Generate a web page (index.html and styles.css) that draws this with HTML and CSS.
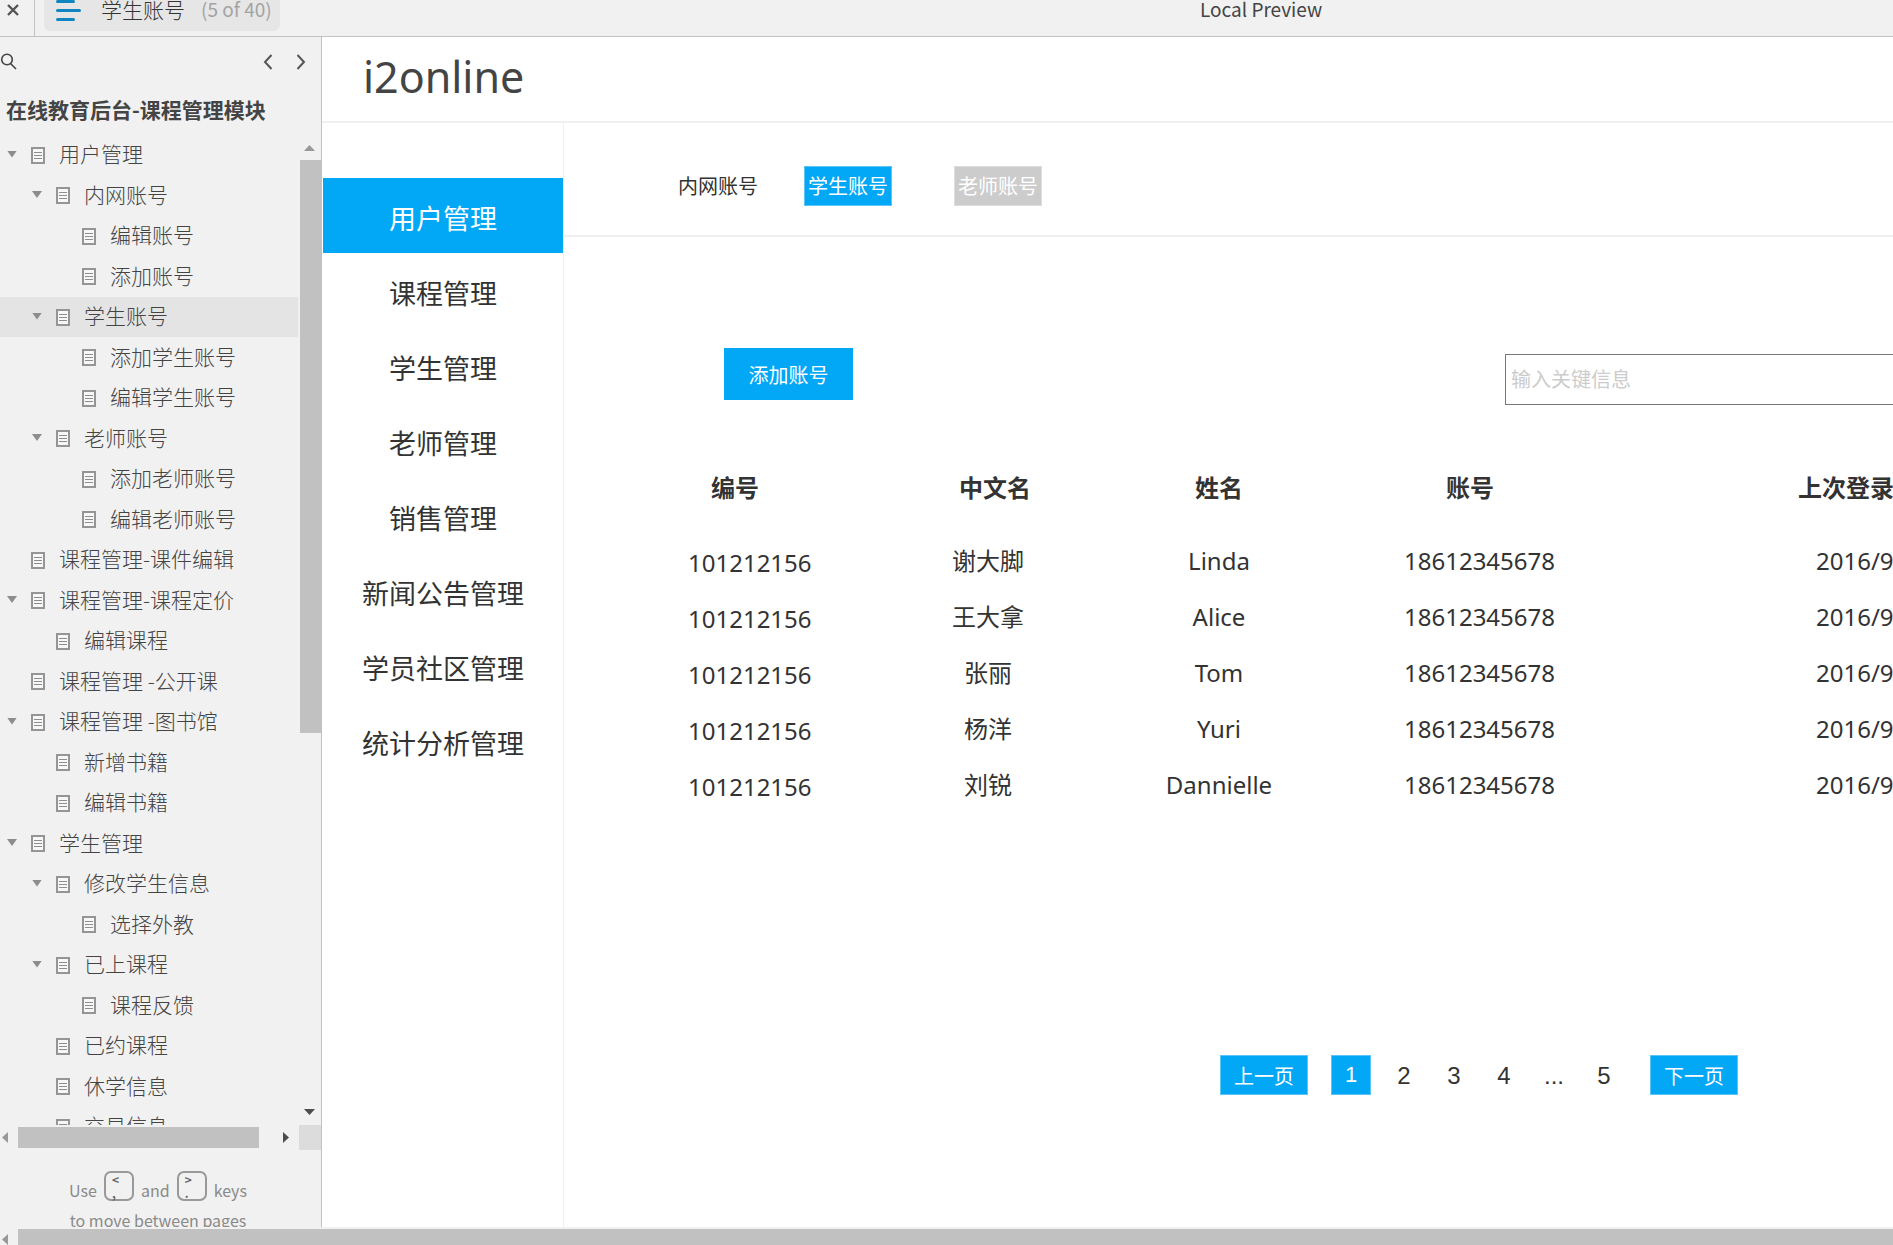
FILE: index.html
```html
<!DOCTYPE html>
<html lang="zh-CN">
<head>
<meta charset="utf-8">
<title>学生账号</title>
<link rel="stylesheet" href="styles.css">
</head>
<body>
<svg class="defs" aria-hidden="true">
  <symbol id="page" viewBox="0 0 14 17"><rect x="1" y="1" width="12" height="15" fill="#f7f7f7" stroke="#959595" stroke-width="2"/><path d="M3 5.500h8M3 8.500h8M3 11.500h8" stroke="#8d8d8d"/></symbol>
</svg>

<header class="topbar">
  <button class="close" aria-label="关闭"><svg width="12" height="12" viewBox="0 0 12 12"><path d="M1 1l10 10M11 1L1 11" stroke="#555" stroke-width="2.4"/></svg></button>
  <button class="page-pill">
    <svg width="26" height="21" viewBox="0 0 26 21"><path d="M1.500 1.500h16M1.500 10.500h22M1.500 19.500h16" stroke="#0f86c0" stroke-width="3" stroke-linecap="round"/></svg>
    <span class="page-name">学生账号</span>
    <span class="page-count">(5 of 40)</span>
  </button>
  <span class="preview">Local Preview</span>
</header>

<div class="workspace">
  <aside class="sidebar">
    <div class="tools">
      <button aria-label="搜索"><svg width="17" height="17" viewBox="0 0 17 17" fill="none" stroke="#444" stroke-width="1.6"><circle cx="7" cy="6.500" r="5.300"/><path d="M10.500 10.500l5.500 5.500"/></svg></button>
      <span class="steps">
        <button aria-label="上一页"><svg width="10" height="16" viewBox="0 0 10 16"><path d="M8.500 1L2 8l6.500 7" fill="none" stroke="#555" stroke-width="2"/></svg></button>
        <button aria-label="下一页"><svg width="10" height="16" viewBox="0 0 10 16"><path d="M1.500 1L8 8l-6.500 7" fill="none" stroke="#555" stroke-width="2"/></svg></button>
      </span>
    </div>
    <h2 class="project">在线教育后台-课程管理模块</h2>
    <div class="tree-area">
      <ul class="tree">
        <li class="l0 open"><svg><use href="#page"/></svg><a href="#">用户管理</a></li>
        <li class="l1 open"><svg><use href="#page"/></svg><a href="#">内网账号</a></li>
        <li class="l2"><svg><use href="#page"/></svg><a href="#">编辑账号</a></li>
        <li class="l2"><svg><use href="#page"/></svg><a href="#">添加账号</a></li>
        <li class="l1 open selected"><svg><use href="#page"/></svg><a href="#">学生账号</a></li>
        <li class="l2"><svg><use href="#page"/></svg><a href="#">添加学生账号</a></li>
        <li class="l2"><svg><use href="#page"/></svg><a href="#">编辑学生账号</a></li>
        <li class="l1 open"><svg><use href="#page"/></svg><a href="#">老师账号</a></li>
        <li class="l2"><svg><use href="#page"/></svg><a href="#">添加老师账号</a></li>
        <li class="l2"><svg><use href="#page"/></svg><a href="#">编辑老师账号</a></li>
        <li class="l0"><svg><use href="#page"/></svg><a href="#">课程管理-课件编辑</a></li>
        <li class="l0 open"><svg><use href="#page"/></svg><a href="#">课程管理-课程定价</a></li>
        <li class="l1"><svg><use href="#page"/></svg><a href="#">编辑课程</a></li>
        <li class="l0"><svg><use href="#page"/></svg><a href="#">课程管理 -公开课</a></li>
        <li class="l0 open"><svg><use href="#page"/></svg><a href="#">课程管理 -图书馆</a></li>
        <li class="l1"><svg><use href="#page"/></svg><a href="#">新增书籍</a></li>
        <li class="l1"><svg><use href="#page"/></svg><a href="#">编辑书籍</a></li>
        <li class="l0 open"><svg><use href="#page"/></svg><a href="#">学生管理</a></li>
        <li class="l1 open"><svg><use href="#page"/></svg><a href="#">修改学生信息</a></li>
        <li class="l2"><svg><use href="#page"/></svg><a href="#">选择外教</a></li>
        <li class="l1 open"><svg><use href="#page"/></svg><a href="#">已上课程</a></li>
        <li class="l2"><svg><use href="#page"/></svg><a href="#">课程反馈</a></li>
        <li class="l1"><svg><use href="#page"/></svg><a href="#">已约课程</a></li>
        <li class="l1"><svg><use href="#page"/></svg><a href="#">休学信息</a></li>
        <li class="l1"><svg><use href="#page"/></svg><a href="#">交易信息</a></li>
      </ul>
      <div class="vbar"><i class="arrow up"></i><i class="track"><i class="vthumb"></i></i><i class="arrow down"></i></div>
    </div>
    <div class="hbar"><i class="arrow left"></i><i class="hthumb"></i><i class="arrow right"></i><i class="corner"></i></div>
    <div class="hint">
      <p>Use <kbd><span>&lt;</span><span>,</span></kbd> and <kbd><span>&gt;</span><span>.</span></kbd> keys</p>
      <p>to move between pages</p>
    </div>
  </aside>

  <main class="site">
    <div class="brand"><h1>i2online</h1></div>
    <div class="site-body">
      <nav class="menu">
        <a href="#" class="active">用户管理</a>
        <a href="#">课程管理</a>
        <a href="#">学生管理</a>
        <a href="#">老师管理</a>
        <a href="#">销售管理</a>
        <a href="#">新闻公告管理</a>
        <a href="#">学员社区管理</a>
        <a href="#">统计分析管理</a>
      </nav>
      <section class="content">
        <div class="tabs">
          <button class="tab">内网账号</button>
          <button class="tab current">学生账号</button>
          <button class="tab muted">老师账号</button>
        </div>
        <div class="toolbar">
          <button class="add">添加账号</button>
          <input class="search" type="text" placeholder="输入关键信息" aria-label="输入关键信息">
        </div>
        <table class="accounts">
          <colgroup><col class="c-id"><col class="c-cn"><col class="c-en"><col class="c-account"><col></colgroup>
          <thead><tr><th class="id">编号</th><th class="cn">中文名</th><th>姓名</th><th class="account">账号</th><th class="last">上次登录</th></tr></thead>
          <tbody>
            <tr><td class="id">101212156</td><td>谢大脚</td><td>Linda</td><td class="account">18612345678</td><td class="last">2016/9</td></tr>
            <tr><td class="id">101212156</td><td>王大拿</td><td>Alice</td><td class="account">18612345678</td><td class="last">2016/9</td></tr>
            <tr><td class="id">101212156</td><td>张丽</td><td>Tom</td><td class="account">18612345678</td><td class="last">2016/9</td></tr>
            <tr><td class="id">101212156</td><td>杨洋</td><td>Yuri</td><td class="account">18612345678</td><td class="last">2016/9</td></tr>
            <tr><td class="id">101212156</td><td>刘锐</td><td>Dannielle</td><td class="account">18612345678</td><td class="last">2016/9</td></tr>
          </tbody>
        </table>
        <div class="pager">
          <button class="step">上一页</button>
          <button class="num current">1</button>
          <div class="nums">
            <button class="num">2</button>
            <button class="num">3</button>
            <button class="num">4</button>
            <span class="num">...</span>
            <button class="num">5</button>
          </div>
          <button class="step">下一页</button>
        </div>
      </section>
    </div>
  </main>
</div>
<div class="window-bar"><i class="arrow left"></i><i class="window-thumb"></i></div>
</body>
</html>
```
FILE: styles.css
```css
* { box-sizing: border-box; }

body {
  margin: 0;
  height: 100vh;
  display: flex;
  flex-direction: column;
  overflow: hidden;
  background: #fff;
  color: #333;
  font-family: "Noto Sans", "Noto Sans CJK SC", sans-serif;
}

button {
  margin: 0;
  padding: 0;
  border: 0;
  background: none;
  color: inherit;
  font: inherit;
}

a { color: inherit; text-decoration: none; }
svg { display: block; }
.defs { position: absolute; width: 0; height: 0; }

/* Top bar */
.topbar {
  flex: none;
  display: grid;
  grid-template-columns: 35px 236px 1fr;
  column-gap: 9px;
  height: 37px;
  border-bottom: 1px solid #c2c2c2;
  background: #f1f1f1;
  font-family: "Noto Sans CJK SC", sans-serif;
}

.close {
  padding: 4px 0 0 7px;
  display: flex;
  border-right: 1px solid #c2c2c2;
}

.page-pill {
  display: flex;
  align-items: flex-start;
  height: 31px;
  padding: 0 0 0 12px;
  border-radius: 0 0 6px 6px;
  background: #e6e6e6;
  line-height: 18px;
  white-space: nowrap;
}

.page-name { margin-left: 19px; font-size: 21px; font-weight: 300; }
.page-count { margin-left: 16px; font-size: 19px; color: #a3a3a3; }

.preview {
  padding-left: 911px;
  font-size: 19px;
  line-height: 18px;
  color: #444;
}

.workspace { flex: 1; display: flex; min-height: 0; }

/* Page tree */
.sidebar {
  flex: none;
  width: 322px;
  display: flex;
  flex-direction: column;
  overflow: hidden;
  border-right: 1px solid #c2c2c2;
  background: #f1f1f1;
  color: #444;
  font-family: "Noto Sans CJK SC", sans-serif;
}

.tools {
  display: flex;
  justify-content: space-between;
  padding: 16px 15px 0 0;
  height: 56px;
}

.steps { display: flex; gap: 23px; }
.tools button { height: 17px; }

.project {
  margin: 0 0 0 6px;
  height: 42px;
  font-size: 21px;
  line-height: 32px;
}

.tree-area { flex: 1; display: flex; min-height: 0; }

.tree {
  flex: 1;
  margin: 0;
  padding: 0;
  overflow: hidden;
  list-style: none;
  font-size: 21px;
  font-weight: 300;
}

.tree li {
  display: flex;
  align-items: center;
  height: 40px;
}

.tree li:nth-child(even) { height: 41px; }
.tree svg { width: 14px; height: 17px; margin-right: 14px; }
.tree a { padding-bottom: 4px; }

.tree li::before {
  content: "";
  width: 10px;
  height: 7px;
  margin: 0 14px 2px 7px;
}

.tree .open::before {
  background: #8d8d8d;
  clip-path: polygon(0 0, 100% 0, 50% 100%);
}

.tree .l1 { padding-left: 25px; }
.tree .l2 { padding-left: 51px; }
.tree .selected { background: #e4e4e4; }

/* Scroll bars */
.arrow { display: block; flex: none; background: #999; }
.up { width: 11px; height: 6px; clip-path: polygon(50% 0, 100% 100%, 0 100%); }
.down { width: 11px; height: 6px; background: #4d4d4d; clip-path: polygon(0 0, 100% 0, 50% 100%); }
.left { width: 6px; height: 11px; clip-path: polygon(100% 0, 100% 100%, 0 50%); }
.right { width: 6px; height: 11px; background: #4d4d4d; clip-path: polygon(0 0, 100% 50%, 0 100%); }

.vbar {
  width: 23px;
  display: flex;
  flex-direction: column;
  align-items: center;
  padding: 10px 0;
}

.track { flex: 1; width: 21px; margin: 9px 0; align-self: flex-end; }
.vthumb { display: block; height: 61%; background: #c1c1c1; }

.hbar {
  flex: none;
  height: 25px;
  display: flex;
  align-items: center;
  padding-left: 2px;
}

.hthumb { width: 241px; height: 21px; margin: 0 24px 0 10px; background: #c1c1c1; }
.corner { flex: 1; height: 25px; margin-left: 10px; background: #dcdcdc; }

.hint {
  flex: none;
  height: 77px;
  padding-top: 21px;
  overflow: hidden;
  text-align: center;
  font-size: 16px;
  color: #8a8a8a;
}

.hint p {
  display: flex;
  justify-content: center;
  align-items: flex-end;
  gap: 7px;
  height: 30px;
  margin: 0;
  padding-right: 5px;
  line-height: 22px;
}

.hint kbd {
  display: flex;
  flex-direction: column;
  width: 30px;
  height: 30px;
  padding: 0 6px;
  border: 2px solid #999;
  border-radius: 7px;
  font: bold 12px/13px "Noto Sans CJK SC", sans-serif;
  color: #666;
  text-align: left;
}

/* Admin site */
.site {
  flex: 1;
  min-width: 0;
  display: flex;
  flex-direction: column;
  overflow: hidden;
}

.brand {
  flex: none;
  height: 86px;
  padding-left: 41px;
  border-bottom: 2px solid #f0f0f0;
}

.brand h1 {
  margin: 0;
  font-size: 43px;
  font-weight: 400;
  line-height: 80px;
  color: #444;
}

.site-body { flex: 1; display: flex; min-height: 0; }

.menu {
  flex: none;
  width: 242px;
  padding: 55px 0 0 1px;
  border-right: 1px solid #f0f0f0;
  font-size: 27px;
  text-align: center;
}

.menu a { display: block; height: 75px; line-height: 81px; }
.menu .active { background: #02a7f6; color: #fff; }

.content { flex: 1; min-width: 0; }

.tabs {
  display: flex;
  gap: 42px;
  height: 114px;
  padding: 43px 0 0 110px;
  border-bottom: 2px solid #f0f0f0;
}

.tab {
  width: 88px;
  height: 40px;
  padding-top: 2px;
  border: 1px solid transparent;
  font-size: 20px;
  line-height: 36px;
}

.current { border: 1px solid #5cc5f8; background: #02a7f6; color: #fff; }
.muted { margin-left: 20px; border-color: #dedede; background: #ccc; color: #fff; }

.toolbar {
  display: flex;
  align-items: flex-end;
  height: 168px;
  padding-left: 160px;
}

.add {
  width: 129px;
  height: 52px;
  margin-bottom: 5px;
  background: #02a7f6;
  color: #fff;
  font-size: 20px;
}

.search {
  flex: 1;
  min-width: 0;
  height: 51px;
  margin-left: 652px;
  padding: 0 5px;
  border: 1px solid #777;
  border-right: 0;
  border-radius: 0;
  font: 20px "Noto Sans", "Noto Sans CJK SC", sans-serif;
}

.search::placeholder { color: #ccc; opacity: 1; }

.accounts {
  width: calc(100% - 124px);
  margin: 38px 0 0 124px;
  table-layout: fixed;
  border-collapse: collapse;
  font-size: 24px;
  line-height: 32px;
  text-align: center;
  white-space: nowrap;
}

.c-id { width: 220px; }
.c-cn { width: 160px; }
.c-en { width: 302px; }
.c-account { width: 428px; }

.accounts th { height: 90px; padding: 0; }
.accounts td { height: 56px; padding: 0; }
.accounts .id, .accounts .account, .accounts .last { text-align: left; }
.accounts th.id { padding-left: 23px; }
.accounts th.cn { padding-left: 14px; }
.accounts td.id { padding-top: 4px; }
.accounts th.account { padding-left: 76px; }
.accounts td.account { padding-left: 34px; }
.accounts td.last { padding-left: 18px; }

.pager {
  display: flex;
  margin-top: 242px;
  padding-left: 656px;
}

.step {
  width: 88px;
  height: 40px;
  border: 1px solid #5cc5f8;
  background: #02a7f6;
  color: #fff;
  font-size: 20px;
}

.nums { display: flex; gap: 10px; margin: 0 26px 0 13px; }

.num {
  width: 40px;
  height: 40px;
  font: 24px/41px "Liberation Sans", sans-serif;
  text-align: center;
}

.num.current { margin-left: 23px; font-size: 22px; line-height: 36px; }

/* Window scroll bar */
.window-bar {
  flex: none;
  display: flex;
  align-items: flex-end;
  gap: 10px;
  height: 18px;
  padding-left: 2px;
  background: #f1f1f1;
}

.window-thumb { flex: 1; height: 16px; background: #c1c1c1; }
```
